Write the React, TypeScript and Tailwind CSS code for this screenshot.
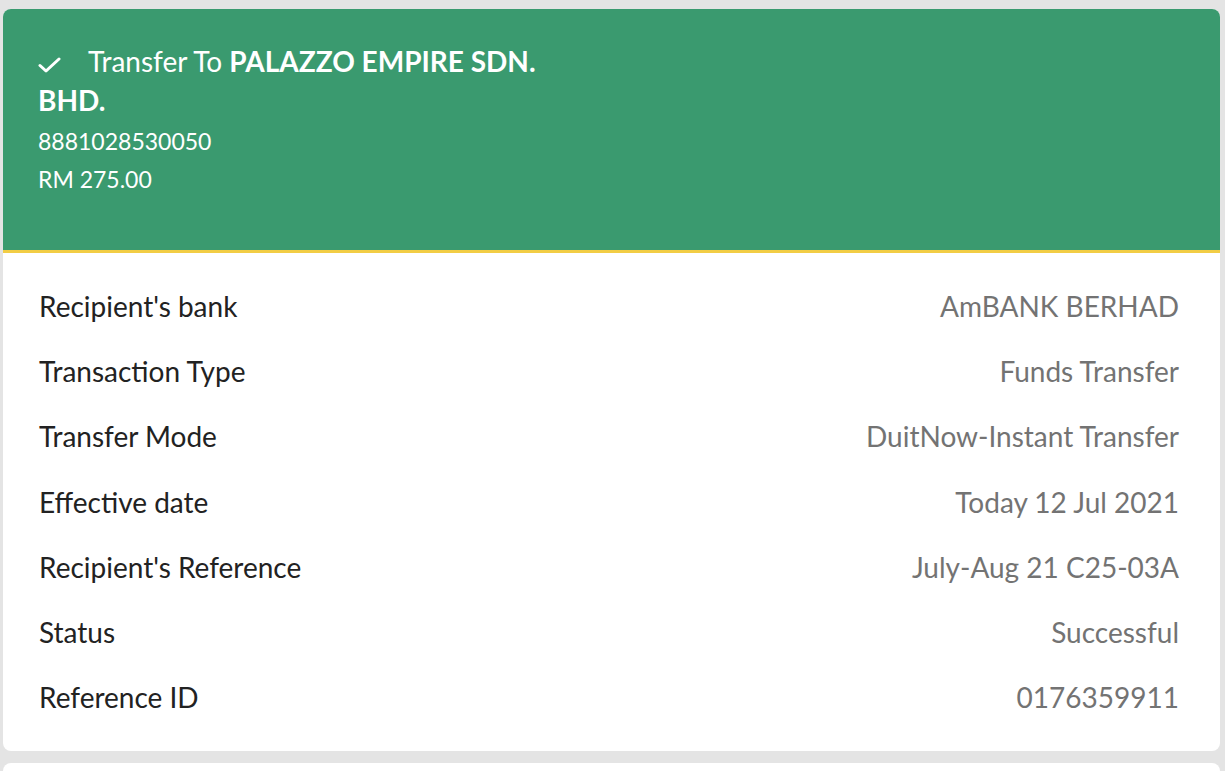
const rows = [
  { label: "Recipient's bank", value: "AmBANK BERHAD" },
  { label: "Transaction Type", value: "Funds Transfer" },
  { label: "Transfer Mode", value: "DuitNow-Instant Transfer" },
  { label: "Effective date", value: "Today 12 Jul 2021" },
  { label: "Recipient's Reference", value: "July-Aug 21 C25-03A" },
  { label: "Status", value: "Successful" },
  { label: "Reference ID", value: "0176359911" },
];

function Tick() {
  return (
    <svg
      width="23"
      height="16"
      viewBox="0 0 23 16"
      fill="none"
      stroke="currentColor"
      strokeWidth="3"
      strokeLinecap="round"
      strokeLinejoin="round"
      className="mr-[27px] inline-block align-[-1px]"
    >
      <path d="M2 8.5 8 14 21 2" />
    </svg>
  );
}

export default function App() {
  return (
    <div
      className="min-h-[771px] bg-[#e4e4e4] pt-[9px] pl-[3px] pr-[5px]"
      style={{ fontFamily: "Lato, 'Open Sans', sans-serif" }}
    >
      <div className="overflow-hidden rounded-[8px] bg-white">
        <div className="border-b-[3px] border-[#f2cd45] bg-[#3a9a6f] pt-[33px] pb-[51px] pl-[35px] text-white">
          <div className="w-[520px] text-[28px] leading-[39px]">
            <Tick />
            <span>Transfer To </span>
            <span className="font-bold">PALAZZO EMPIRE SDN. BHD.</span>
          </div>
          <div className="mt-[2px] text-[23px] leading-[39px]">8881028530050</div>
          <div className="-mt-px text-[23px] leading-[39px]">RM 275.00</div>
        </div>

        <div className="pt-[20px] pb-[21px] pl-[36px] pr-[41px]">
          {rows.map((r) => (
            <div
              key={r.label}
              className="flex h-[65.3px] items-center justify-between text-[28px]"
            >
              <span className="text-[#222222]">{r.label}</span>
              <span className="text-[#737373]">{r.value}</span>
            </div>
          ))}
        </div>
      </div>
      <div className="mt-[12px] h-[40px] rounded-t-[8px] bg-white" />
    </div>
  );
}
